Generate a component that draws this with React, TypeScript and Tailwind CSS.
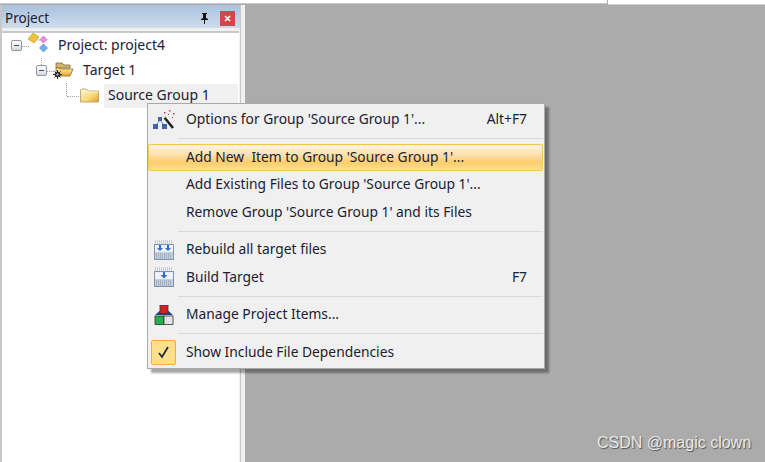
const font = { fontFamily: '"Noto Sans", "Open Sans", sans-serif' }

function MinusBox() {
  return (
    <span className="flex h-[11px] w-[11px] shrink-0 items-center justify-center rounded-[2px] border border-[#8e97a3] bg-[linear-gradient(#ffffff,#d5d9df)]">
      <span className="h-px w-[5px] bg-[#3e4a60]" />
    </span>
  )
}

function ProjectIcon() {
  return (
    <svg width="20" height="20" viewBox="0 0 20 20" className="shrink-0">
      <path d="M7 7h8v6" fill="none" stroke="#9a9a9a" strokeWidth="1" strokeDasharray="1 1" />
      <path d="M0 6l5-6 6 4-5 6z" fill="#f0c23c" stroke="#b98f1c" strokeWidth=".6" />
      <path d="M15.500 3l3.500 3.500-3.500 3.500-3.500-3.500z" fill="#ee8fe0" stroke="#b95aa8" strokeWidth=".6" />
      <path d="M15.500 11l4 4-4 4-4-4z" fill="#6faee8" stroke="#3f78b8" strokeWidth=".6" />
    </svg>
  )
}

function OpenFolderIcon() {
  return (
    <svg width="21" height="17" viewBox="0 0 21 17" className="shrink-0">
      <path d="M3 3V1h6l2 2h6v3H3z" fill="#d6b469" stroke="#7e6a3c" strokeWidth=".8" />
      <path d="M3 13V6h3l1 1h13l-3 7H4z" fill="url(#fo)" stroke="#8f6c22" strokeWidth=".8" />
      <path d="M0 12.500h9M4.500 8v9M1.500 9.500l6 6M7.500 9.500l-6 6" stroke="#222" strokeWidth="1" />
      <circle cx="4.500" cy="12.500" r="2.800" fill="#333" />
      <circle cx="4.500" cy="12.500" r="1" fill="#ddd" />
      <defs>
        <linearGradient id="fo" x1="0" y1="0" x2="0" y2="1">
          <stop offset="0" stopColor="#fff0b8" />
          <stop offset="1" stopColor="#e6a21f" />
        </linearGradient>
      </defs>
    </svg>
  )
}

function FolderIcon() {
  return (
    <svg width="19" height="15" viewBox="0 0 19 15" className="shrink-0">
      <path d="M.5 14V2l1-1h5l2 2h10v11z" fill="url(#fc)" stroke="#a89a70" strokeWidth=".8" />
      <path d="M1 4h17" stroke="#fdf6d8" strokeWidth="1" />
      <defs>
        <linearGradient id="fc" x1="0" y1="0" x2="1" y2="1">
          <stop offset="0" stopColor="#fff6c8" />
          <stop offset=".6" stopColor="#f7d777" />
          <stop offset="1" stopColor="#dd9f1e" />
        </linearGradient>
      </defs>
    </svg>
  )
}

function WandIcon() {
  return (
    <svg width="22" height="20" viewBox="0 0 22 20">
      <path d="M11 7l9 11" stroke="#222" strokeWidth="2.600" />
      <path d="M8.500 4l3 4" stroke="#e8e8e8" strokeWidth="2.600" />
      <path d="M7 10l-4 5M7 10l4 5" stroke="#6a86c0" strokeWidth="1" />
      <rect x="5" y="7" width="4" height="4" fill="#3f62ac" />
      <rect x="0" y="14" width="5" height="5" fill="#3f62ac" />
      <rect x="9" y="14" width="5" height="5" fill="#3f62ac" />
      <path d="M11 2h1.500v1.500H11zM16 0h1.500v1.500H16zM20 3h1.500v1.500H20zM15 4h1v1h-1zM19 7h1v1h-1z" fill="#c9384a" />
    </svg>
  )
}

function BuildIcon({ double }: { double?: boolean }) {
  return (
    <svg width="20" height="20" viewBox="0 0 20 20">
      <rect x=".5" y="4.500" width="19" height="15" fill="#eef2f8" stroke="#7f94ad" />
      <rect x="1" y="12" width="18" height="7" fill="#c5d0de" />
      <path d="M2 14h16M2 16h16M2 18h16" stroke="#6d7c90" strokeWidth=".7" strokeDasharray="1 1" />
      <path d="M1 1h18M1 3h18" stroke="#8a97a8" strokeWidth=".8" strokeDasharray="1 1" />
      {double ? (
        <path d="M5 5h2v3h2l-3 3-3-3h2zM13 5h2v3h2l-3 3-3-3h2z" fill="#2f6fd0" />
      ) : (
        <path d="M9 5h2v3h2.500L10 11.500 6.500 8H9z" fill="#2f6fd0" />
      )}
    </svg>
  )
}

function ManageIcon() {
  return (
    <svg width="20" height="20" viewBox="0 0 20 20">
      <path d="M1 10l4.500-4h9L19 10z" fill="#27457e" />
      <rect x="6" y="0.500" width="8" height="8" fill="#d81f26" stroke="#333" strokeWidth=".8" />
      <rect x="1" y="11" width="9" height="8.500" fill="#22b04a" stroke="#333" strokeWidth=".8" />
      <rect x="10" y="11" width="9" height="8.500" fill="#e4e4e4" stroke="#333" strokeWidth=".8" />
    </svg>
  )
}

function MenuRow({ icon, label, shortcut, active }: { icon?: React.ReactNode; label: string; shortcut?: string; active?: boolean }) {
  return (
    <div
      className={
        active
          ? 'flex h-[27.500px] items-center rounded-[2px] border border-[#f8c550] bg-[linear-gradient(#fff3e2_0%,#fde3b4_35%,#fdcd6c_70%,#fee08f_100%)]'
          : 'flex h-[27.500px] items-center border border-transparent'
      }
    >
      <span className="mr-[8px] flex w-[29px] shrink-0 items-center justify-center">{icon}</span>
      <span className="flex-1 whitespace-pre text-[#1c2030]">{label}</span>
      {shortcut && <span className="mr-[15px] text-[#1c2030]">{shortcut}</span>}
    </div>
  )
}

function Divider() {
  return <div className="my-[4.500px] ml-[30px] h-px bg-[#d9d9d9]" />
}

export default function App() {
  return (
    <div className="relative flex h-[462px] w-[765px] flex-col overflow-hidden bg-[#ababab] text-[13.800px]" style={font}>
      <div className="flex h-[5px] shrink-0">
        <div className="h-[4px] w-[607px] border-b border-[#c9c9c9] bg-white" />
        <div className="ml-px h-[5px] flex-1 border-b border-[#d0d0d0] bg-white" />
      </div>

      <div className="flex min-h-0 flex-1">
        <aside className="flex w-[240px] shrink-0 flex-col border-l-2 border-[#c8c8c8] bg-[#f0f0f0]">
          <div className="flex h-[23px] shrink-0 items-center justify-between bg-[linear-gradient(#a9c2de,#cddcec)] pl-[3px] pr-[5px] pt-[3px] text-[13.500px] text-[#1c2030]">
            <span>Project</span>
            <div className="flex items-center gap-[11px]">
              <svg width="9" height="11" viewBox="0 0 9 11">
                <path d="M2 0h5v1H6v4l2 1v1H5v4H4V7H1V6l2-1V1H2z" fill="#111" />
              </svg>
              <span className="flex h-[15px] w-[15px] items-center justify-center bg-[#d0484e]">
                <svg width="7" height="7" viewBox="0 0 7 7">
                  <path d="M1 1l5 5M6 1l-5 5" stroke="#fff" strokeWidth="1.600" />
                </svg>
              </span>
            </div>
          </div>

          <div className="mt-[3px] mr-px flex-1 border-t-2 border-[#c9c9c9] bg-white">
            <div className="relative">
              <span className="absolute left-[20px] top-[13px] w-[7px] border-t border-dotted border-[#a0a0a0]" />
              <span className="absolute left-[39px] top-[25px] h-[7px] border-l border-dotted border-[#a0a0a0]" />
              <span className="absolute left-[45px] top-[38px] w-[7px] border-t border-dotted border-[#a0a0a0]" />
              <span className="absolute left-[64px] top-[50px] h-[13px] border-l border-dotted border-[#a0a0a0]" />
              <span className="absolute left-[65px] top-[63px] w-[14px] border-t border-dotted border-[#a0a0a0]" />
              <div className="flex h-[25px] items-center pl-[9px]">
                <MinusBox />
                <span className="ml-[6px] -mt-[6px]"><ProjectIcon /></span>
                <span className="ml-[10px] pb-[2px] text-[14px] text-[#1c2030]">Project: project4</span>
              </div>
              <div className="flex h-[25px] items-center pl-[34px]">
                <MinusBox />
                <span className="ml-[6px]"><OpenFolderIcon /></span>
                <span className="ml-[9px] pb-[2px] text-[14px] text-[#1c2030]">Target 1</span>
              </div>
              <div className="flex h-[25px] items-center pl-[60px]">
                <span className="ml-[18px]"><FolderIcon /></span>
                <span className="ml-[5px] flex h-[24px] w-[134px] items-center bg-[#f0f0f0] pb-[2px] pl-[4px] text-[14px] text-[#1c2030]">Source Group 1</span>
              </div>
            </div>
          </div>
        </aside>
        <div className="w-[5px] shrink-0 border-l border-[#c8c8c8] bg-[#f0f0f0]" />
        <main className="flex-1 bg-[#ababab]" />
      </div>

      <div className="absolute left-[147px] top-[103px] w-[398px] border border-[#a9a9a9] bg-[#f0f0f0] py-[2px] pr-px shadow-[4px_4px_2px_rgba(0,0,0,0.35)]">
        <MenuRow icon={<WandIcon />} label="Options for Group 'Source Group 1'..." shortcut="Alt+F7" />
        <Divider />
        <MenuRow active label="Add New  Item to Group 'Source Group 1'..." />
        <MenuRow label="Add Existing Files to Group 'Source Group 1'..." />
        <MenuRow label="Remove Group 'Source Group 1' and its Files" />
        <Divider />
        <MenuRow icon={<BuildIcon double />} label="Rebuild all target files" />
        <MenuRow icon={<BuildIcon />} label="Build Target" shortcut="F7" />
        <Divider />
        <MenuRow icon={<ManageIcon />} label="Manage Project Items..." />
        <Divider />
        <MenuRow
          icon={
            <span className="flex h-[25px] w-[25px] items-center justify-center rounded-[2px] border border-[#f3a94a] bg-[#ffdf8a]">
              <svg width="13" height="13" viewBox="0 0 13 13">
                <path d="M2 7l3 4 6-10" fill="none" stroke="#1c2a44" strokeWidth="1.800" />
              </svg>
            </span>
          }
          label="Show Include File Dependencies"
        />
      </div>

      <span
        className="absolute left-[597px] top-[435px] text-[16px] leading-none text-[#e8e8e8] [text-shadow:1px_1px_1px_#555]"
        style={{ fontFamily: '"Liberation Sans", sans-serif' }}
      >
        CSDN @magic clown
      </span>
    </div>
  )
}
